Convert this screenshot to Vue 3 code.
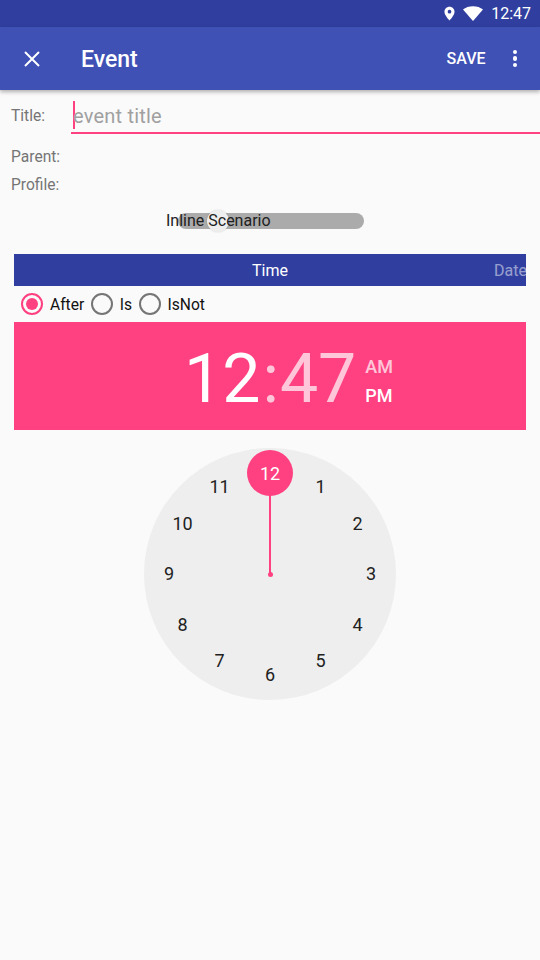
<script setup>
const hours = [1, 2, 3, 4, 5, 6, 7, 8, 9, 10, 11].map((n) => {
  const a = (n * 30 * Math.PI) / 180
  return { n, x: 126 + 101 * Math.sin(a), y: 126 - 101 * Math.cos(a) }
})
const radios = [
  { label: 'After', on: true },
  { label: 'Is', on: false },
  { label: 'IsNot', on: false }
]
</script>

<template>
  <div class="screen">
    <div class="status">
      <svg class="pin" width="11" height="15" viewBox="0 0 12 16">
        <path fill="#fff" fill-rule="evenodd" d="M6 0.500C2.900 0.500 0.500 2.900 0.500 6 0.500 10 6 15.500 6 15.500S11.500 10 11.500 6C11.500 2.900 9.100 0.500 6 0.500ZM6 4A2 2 0 1 1 6 8 2 2 0 0 1 6 4Z" />
      </svg>
      <svg class="wifi" width="20" height="15" viewBox="0 0 20 15">
        <path fill="#fff" d="M0 3.600C2.600 1.500 6.100 0.300 10 0.300S17.400 1.500 20 3.600L10 15Z" />
      </svg>
      <span class="clock-text">12:47</span>
    </div>

    <div class="toolbar">
      <svg class="close" width="16" height="16" viewBox="0 0 16 16">
        <path stroke="#fff" stroke-width="2" d="M1 1L15 15M15 1L1 15" />
      </svg>
      <span class="toolbar-title">Event</span>
      <span class="save">SAVE</span>
      <div class="dots"><i></i><i></i><i></i></div>
    </div>

    <div class="title-row">
      <span class="label">Title:</span>
      <div class="input">
        <span class="caret"></span>
        <span class="placeholder">event title</span>
      </div>
    </div>
    <div class="label parent">Parent:</div>
    <div class="label profile">Profile:</div>

    <div class="switch-row">
      <div class="switch">
        <div class="track"></div>
        <div class="thumb"></div>
        <span class="switch-text">Inline Scenario</span>
      </div>
    </div>

    <div class="tabs">
      <span class="tab-time">Time</span>
      <span class="tab-date">Date</span>
    </div>

    <div class="radios">
      <div class="radio" v-for="r in radios" :key="r.label">
        <span class="circle" :class="{ on: r.on }"></span>
        <span class="radio-label">{{ r.label }}</span>
      </div>
    </div>

    <div class="time-head">
      <div class="digits">
        <span>12</span><span class="faded colon">:</span><span class="faded">47</span>
      </div>
      <div class="ampm">
        <span class="faded">AM</span>
        <span>PM</span>
      </div>
    </div>

    <div class="dial">
      <div class="hand"></div>
      <div class="center-dot"></div>
      <div class="selected">12</div>
      <span
        class="num"
        v-for="h in hours"
        :key="h.n"
        :style="{ left: h.x + 'px', top: h.y + 'px' }"
      >{{ h.n }}</span>
    </div>
  </div>
</template>

<style scoped>
.screen {
  width: 540px;
  height: 960px;
  background: #fafafa;
  font-family: Roboto, sans-serif;
  overflow: hidden;
}

.status {
  height: 27px;
  background: #303f9f;
  display: flex;
  align-items: center;
  justify-content: flex-end;
  padding-right: 9px;
  color: #fff;
  font-size: 16px;
}
.pin {
  margin-right: 8px;
}
.wifi {
  margin-right: 8px;
}

.toolbar {
  height: 63px;
  background: #3f51b5;
  display: flex;
  align-items: center;
  color: #fff;
  box-shadow: 0 2px 4px rgba(0, 0, 0, 0.3);
  position: relative;
}
.close {
  margin-left: 24px;
}
.toolbar-title {
  margin-left: 41px;
  padding-top: 2px;
  font-size: 23px;
  font-weight: 500;
}
.save {
  margin-left: auto;
  font-size: 16px;
  font-weight: 500;
}
.dots {
  display: flex;
  flex-direction: column;
  gap: 2px;
  margin: 0 23px 0 27px;
}
.dots i {
  width: 4.500px;
  height: 4.500px;
  border-radius: 50%;
  background: #fff;
}

.title-row {
  display: flex;
  height: 44px;
  padding-top: 10px;
  box-sizing: border-box;
}
.label {
  font-size: 15.600px;
  line-height: 18px;
  color: #757575;
  padding-left: 11px;
}
.title-row .label {
  width: 71px;
  flex: none;
  box-sizing: border-box;
  margin-top: 7px;
}
.input {
  flex: 1;
  height: 31px;
  border-bottom: 2px solid #ff4081;
  display: flex;
  align-items: flex-start;
  padding-left: 2px;
  margin-top: 1px;
}
.caret {
  width: 2px;
  height: 28px;
  background: #ff4081;
}
.placeholder {
  font-size: 20px;
  line-height: 30px;
  color: #a0a0a0;
  letter-spacing: 0.200px;
  margin-left: -2px;
}
.parent {
  margin-top: 10px;
  height: 28px;
  line-height: 26px;
}
.profile {
  height: 28px;
  line-height: 26px;
}

.switch-row {
  display: flex;
  height: 49px;
  margin-top: 5px;
  padding-left: 166px;
}
.switch {
  position: relative;
  width: 198px;
  height: 32px;
}
.track {
  position: absolute;
  left: 12px;
  right: 0;
  top: 8px;
  height: 16px;
  border-radius: 8px;
  background: #ababab;
}
.thumb {
  position: absolute;
  left: 41px;
  top: 5px;
  width: 22px;
  height: 22px;
  border-radius: 50%;
  background: #eeeeee;
  box-shadow: 0 0 2px rgba(0, 0, 0, 0.15);
}
.switch-text {
  position: absolute;
  left: 0;
  top: 7px;
  font-size: 16px;
  line-height: 18px;
  color: #212121;
}

.tabs {
  margin: 0 14px;
  height: 32px;
  background: #303f9f;
  position: relative;
  display: flex;
  align-items: center;
  justify-content: center;
  font-size: 16px;
  color: #fff;
  overflow: hidden;
}
.tab-date {
  position: absolute;
  right: -1px;
  color: #fff;
  opacity: 0.5;
}

.radios {
  height: 36px;
  display: flex;
  align-items: center;
  padding-left: 21px;
  gap: 6.500px;
  font-size: 15.600px;
  color: #111;
}
.radio {
  display: flex;
  align-items: center;
  gap: 7px;
}
.radio-label {
  padding-top: 2px;
}
.circle {
  width: 22px;
  height: 22px;
  box-sizing: border-box;
  border: 2px solid #757575;
  border-radius: 50%;
  position: relative;
}
.circle.on {
  border-color: #ff4081;
}
.circle.on::after {
  content: '';
  position: absolute;
  left: 3px;
  top: 3px;
  width: 12px;
  height: 12px;
  border-radius: 50%;
  background: #ff4081;
}

.time-head {
  margin: 0 14px;
  height: 108px;
  background: #ff4081;
  color: #fff;
  display: flex;
  align-items: center;
  padding-left: 170px;
  box-sizing: border-box;
}
.digits {
  font-size: 68px;
  line-height: 108px;
  white-space: nowrap;
  padding-top: 6px;
}
.colon {
  margin: 0 1px 0 2px;
}
.faded {
  opacity: 0.7;
}
.ampm {
  display: flex;
  flex-direction: column;
  gap: 8px;
  margin-left: 9px;
  padding-top: 10px;
  font-size: 18px;
  line-height: 21px;
  font-weight: 500;
}

.dial {
  position: relative;
  width: 252px;
  height: 252px;
  margin: 18px auto 0;
  border-radius: 50%;
  background: #eeeeee;
  font-size: 18px;
  color: #212121;
}
.num {
  position: absolute;
  transform: translate(-50%, -50%);
  line-height: 20px;
}
.hand {
  position: absolute;
  left: 125px;
  top: 46px;
  width: 2px;
  height: 80px;
  background: #ff4081;
}
.center-dot {
  position: absolute;
  left: 123.500px;
  top: 123.500px;
  width: 5px;
  height: 5px;
  border-radius: 50%;
  background: #ff4081;
}
.selected {
  position: absolute;
  left: 103px;
  top: 2px;
  width: 46px;
  height: 46px;
  border-radius: 50%;
  background: #ff4081;
  color: #fff;
  display: flex;
  align-items: center;
  justify-content: center;
}
</style>
